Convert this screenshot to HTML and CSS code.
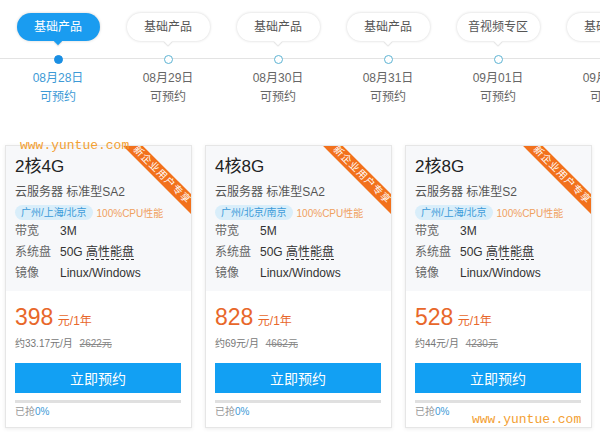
FILE: index.html
```html
<!DOCTYPE html>
<html lang="zh-CN">
<head>
  <meta charset="UTF-8">
  <meta name="viewport" content="width=device-width, initial-scale=1.0">
  <title>云服务器 预约</title>
  <link rel="stylesheet" href="styles.css">
</head>
<body>
  <div class="timeline">
    <div class="tl-items">
      <div class="tl-item active">
        <div class="pill">基础产品</div>
        <div class="dot"></div>
        <div class="date">08月28日</div>
        <div class="state">可预约</div>
      </div>
      <div class="tl-item">
        <div class="pill">基础产品</div>
        <div class="dot"></div>
        <div class="date">08月29日</div>
        <div class="state">可预约</div>
      </div>
      <div class="tl-item">
        <div class="pill">基础产品</div>
        <div class="dot"></div>
        <div class="date">08月30日</div>
        <div class="state">可预约</div>
      </div>
      <div class="tl-item">
        <div class="pill">基础产品</div>
        <div class="dot"></div>
        <div class="date">08月31日</div>
        <div class="state">可预约</div>
      </div>
      <div class="tl-item">
        <div class="pill">音视频专区</div>
        <div class="dot"></div>
        <div class="date">09月01日</div>
        <div class="state">可预约</div>
      </div>
      <div class="tl-item">
        <div class="pill">基础产品</div>
        <div class="dot"></div>
        <div class="date">09月02日</div>
        <div class="state">可预约</div>
      </div>
    </div>
  </div>

  <div class="cards">
    <div class="card">
      <div class="ribbon">新企业用户专享</div>
      <div class="card-top">
        <div class="title">2核4G</div>
        <div class="subtitle">云服务器 标准型SA2</div>
        <div class="tags"><span class="region">广州/上海/北京</span><span class="perf">100%CPU性能</span></div>
        <div class="spec"><span class="label">带宽</span><span class="value">3M</span></div>
        <div class="spec"><span class="label">系统盘</span><span class="value">50G <u class="dotted">高性能盘</u></span></div>
        <div class="spec"><span class="label">镜像</span><span class="value">Linux/Windows</span></div>
      </div>
      <div class="card-bottom">
        <div class="price"><span class="num">398</span> <span class="unit">元/1年</span></div>
        <div class="monthly">约33.17元/月 <s>2622元</s></div>
        <button class="btn">立即预约</button>
        <div class="progress"></div>
        <div class="sold">已抢<span>0%</span></div>
      </div>
    </div>

    <div class="card">
      <div class="ribbon">新企业用户专享</div>
      <div class="card-top">
        <div class="title">4核8G</div>
        <div class="subtitle">云服务器 标准型SA2</div>
        <div class="tags"><span class="region">广州/北京/南京</span><span class="perf">100%CPU性能</span></div>
        <div class="spec"><span class="label">带宽</span><span class="value">5M</span></div>
        <div class="spec"><span class="label">系统盘</span><span class="value">50G <u class="dotted">高性能盘</u></span></div>
        <div class="spec"><span class="label">镜像</span><span class="value">Linux/Windows</span></div>
      </div>
      <div class="card-bottom">
        <div class="price"><span class="num">828</span> <span class="unit">元/1年</span></div>
        <div class="monthly">约69元/月 <s>4662元</s></div>
        <button class="btn">立即预约</button>
        <div class="progress"></div>
        <div class="sold">已抢<span>0%</span></div>
      </div>
    </div>

    <div class="card">
      <div class="ribbon">新企业用户专享</div>
      <div class="card-top">
        <div class="title">2核8G</div>
        <div class="subtitle">云服务器 标准型S2</div>
        <div class="tags"><span class="region">广州/上海/北京</span><span class="perf">100%CPU性能</span></div>
        <div class="spec"><span class="label">带宽</span><span class="value">3M</span></div>
        <div class="spec"><span class="label">系统盘</span><span class="value">50G <u class="dotted">高性能盘</u></span></div>
        <div class="spec"><span class="label">镜像</span><span class="value">Linux/Windows</span></div>
      </div>
      <div class="card-bottom">
        <div class="price"><span class="num">528</span> <span class="unit">元/1年</span></div>
        <div class="monthly">约44元/月 <s>4230元</s></div>
        <button class="btn">立即预约</button>
        <div class="progress"></div>
        <div class="sold">已抢<span>0%</span></div>
      </div>
    </div>
  </div>

  <div class="watermark wm-top">www.yuntue.com</div>
  <div class="watermark wm-bottom">www.yuntue.com</div>
</body>
</html>
```

FILE: styles.css
```css
body {
  margin: 0;
  padding: 0;
  width: 600px;
  height: 441px;
  overflow: hidden;
  position: relative;
  background: #fff;
  font-family: "Liberation Sans", Arial, "Noto Sans CJK SC", sans-serif;
  color: #333;
}

/* timeline */
.timeline {
  position: relative;
  height: 145px;
  overflow: hidden;
}

.timeline::before {
  content: "";
  position: absolute;
  left: 0;
  right: 0;
  top: 58px;
  height: 1px;
  background: #e3e3e3;
}

.tl-items {
  display: flex;
  padding-left: 3px;
}

.tl-item {
  flex: 0 0 110px;
  display: flex;
  flex-direction: column;
  align-items: center;
  position: relative;
}

.pill {
  margin-top: 13px;
  width: 83px;
  height: 28px;
  line-height: 28px;
  border-radius: 14px;
  text-align: center;
  font-size: 12px;
  color: #555;
  background: #fff;
  box-shadow: 0 0 3px rgba(0, 0, 0, 0.18);
  position: relative;
}

.pill::after {
  content: "";
  position: absolute;
  left: 50%;
  bottom: -3px;
  width: 6px;
  height: 6px;
  margin-left: -3px;
  background: inherit;
  transform: rotate(45deg);
  box-shadow: 1px 1px 1px rgba(0, 0, 0, 0.1);
}

.dot {
  margin-top: 14px;
  width: 7px;
  height: 7px;
  border: 1px solid #5cb3d3;
  border-radius: 50%;
  background: #fff;
  position: relative;
}

.date {
  margin-top: 5px;
  font-size: 12px;
  line-height: 19px;
  color: #666;
}

.state {
  font-size: 12px;
  line-height: 19px;
  color: #666;
}

.tl-item.active .pill {
  background: #1a9cf0;
  color: #fff;
}

.tl-item.active .dot {
  background: #1a8fe3;
  border-color: #1a8fe3;
}

.tl-item.active .date,
.tl-item.active .state {
  color: #3d9ad6;
}

/* product cards */
.cards {
  display: flex;
  gap: 13px;
  padding-left: 5px;
}

.card {
  width: 185px;
  height: 281px;
  border: 1px solid #e6e6e6;
  box-shadow: 0 1px 4px rgba(0, 0, 0, 0.08);
  position: relative;
  overflow: hidden;
  background: #fff;
}

.ribbon {
  position: absolute;
  top: 22px;
  right: -23px;
  width: 104px;
  height: 14px;
  line-height: 14px;
  background: #f2711c;
  color: #fff;
  font-size: 10px;
  letter-spacing: 1px;
  text-align: center;
  transform: rotate(45deg);
}

.card-top {
  background: #f7f8fa;
  padding: 8px 10px 7px 9px;
}

.title {
  font-size: 17px;
  line-height: 26px;
  color: #222;
}

.subtitle {
  font-size: 12px;
  line-height: 24px;
  color: #555;
}

.tags {
  height: 17px;
  display: flex;
  align-items: center;
  font-size: 10px;
}

.region {
  background: #d9eefa;
  color: #3b9bd9;
  border-radius: 8px;
  padding: 0 6px;
  line-height: 15px;
}

.perf {
  color: #f0a060;
  margin-left: 4px;
}

.spec {
  display: flex;
  font-size: 12px;
  line-height: 21px;
}

.label {
  width: 45px;
  color: #666;
}

.value {
  color: #333;
}

.dotted {
  text-decoration: none;
  border-bottom: 1px dashed #333;
}

.card-bottom {
  padding: 11px 10px 0 9px;
}

.price {
  color: #e8672a;
  line-height: 30px;
  height: 30px;
}

.price .num {
  font-size: 23px;
}

.price .unit {
  font-size: 12px;
}

.monthly {
  margin-top: 4px;
  font-size: 10px;
  line-height: 16px;
  color: #777;
}

.monthly s {
  margin-left: 4px;
  color: #888;
}

.btn {
  display: block;
  margin-top: 11px;
  width: 166px;
  height: 30px;
  border: none;
  background: #12a0f3;
  color: #fff;
  font-family: inherit;
  font-size: 14px;
  cursor: pointer;
}

.progress {
  margin-top: 7px;
  width: 166px;
  height: 3px;
  background: #e0e0e0;
}

.sold {
  margin-top: 2px;
  font-size: 10px;
  line-height: 14px;
  color: #999;
}

.sold span {
  color: #3d9ad6;
}

/* watermark text over the page */
.watermark {
  position: absolute;
  font-family: "Liberation Mono", "Courier New", monospace;
  font-size: 13px;
  line-height: 14px;
  color: #f3a032;
  white-space: nowrap;
}

.wm-top {
  left: 20px;
  top: 139px;
}

.wm-bottom {
  left: 472px;
  top: 413px;
}
```
